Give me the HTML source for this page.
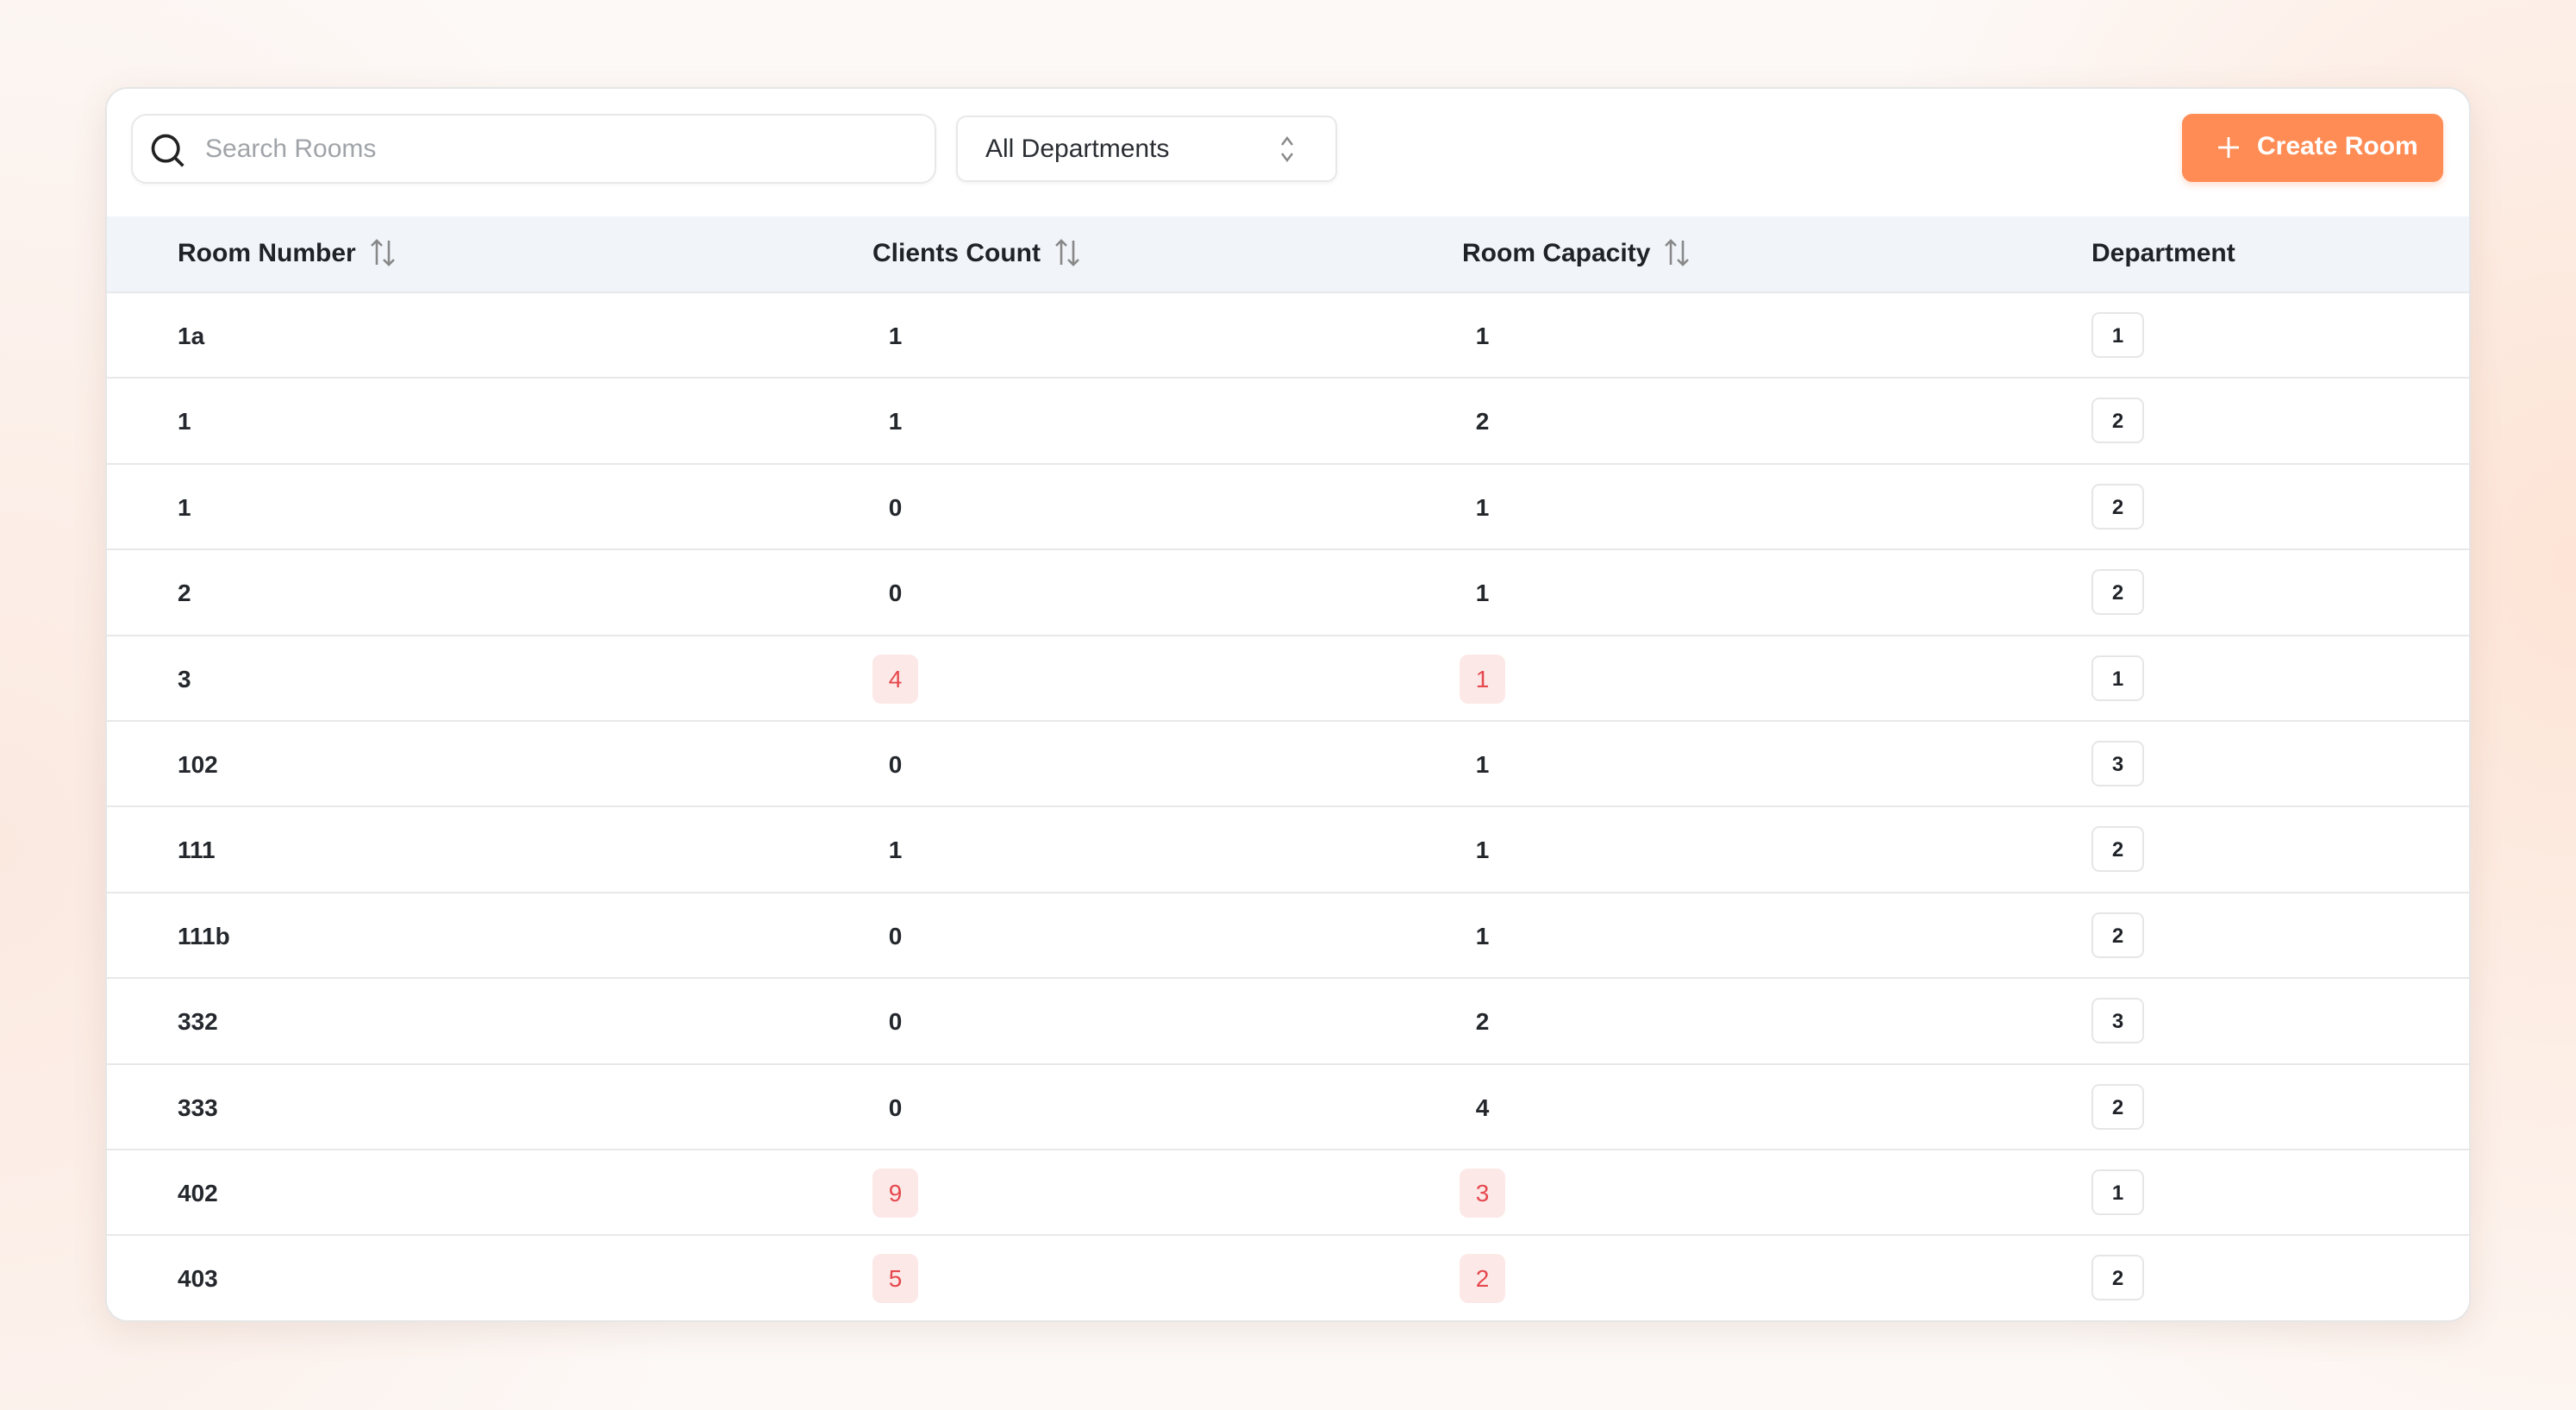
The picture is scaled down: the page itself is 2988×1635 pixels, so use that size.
<!DOCTYPE html>
<html><head><meta charset="utf-8"><style>
*{box-sizing:border-box;margin:0;padding:0}
body{width:2988px;height:1635px;overflow:hidden;font-family:"Liberation Sans",sans-serif;color:#1f2328;
background:radial-gradient(ellipse 900px 1200px at 0% 60%,#fbe9e0 0%,rgba(251,233,224,0) 100%),radial-gradient(ellipse 900px 1200px at 100% 40%,#fde4d6 0%,rgba(253,228,214,0) 100%),#fdf9f7;position:relative}
.card{position:absolute;left:122px;top:101px;width:2744px;height:1432px;background:#fff;border-radius:26px;border:2px solid #e6e6e6;box-shadow:0 10px 40px rgba(120,80,60,0.12);overflow:hidden}
.search{position:absolute;left:28px;top:29px;width:934px;height:81px;border:2px solid #e8e8e8;border-radius:18px;box-shadow:0 2px 4px rgba(0,0,0,.04)}
.search span{position:absolute;left:84px;top:22px;font-size:30px;color:#a0a4a8}
.search svg{position:absolute;left:18px;top:18px}
.sel{position:absolute;left:985px;top:31px;width:442px;height:77px;border:2px solid #e8e8e8;border-radius:12px;box-shadow:0 2px 4px rgba(0,0,0,.05)}
.sel span{position:absolute;left:32px;top:20px;font-size:30px;color:#2a2e33}
.sel svg{position:absolute;right:46px;top:20px}
.btn{position:absolute;left:2407px;top:29px;width:303px;height:79px;background:#ff8c55;border-radius:12px;color:#fff;font-size:30px;font-weight:bold;box-shadow:0 4px 8px rgba(255,140,85,.25)}
.btn span{position:absolute;left:87px;top:21px}
.btn svg{position:absolute;left:40px;top:25px}
.head{position:absolute;left:0;top:148px;width:100%;height:89px;background:#f1f5f9;border-bottom:2px solid #e6e8eb}
.h{position:absolute;top:26px;font-size:30px;font-weight:bold;color:#1f2328;white-space:nowrap}
.h svg{vertical-align:-6px;margin-left:16px}
.row{position:absolute;left:0;width:100%;height:99.4px;border-bottom:2px solid #e8e8e8}
.c{position:absolute;top:34px;font-size:28px;font-weight:bold;color:#24282d}
.n{position:absolute;top:21px;width:53px;height:57px;line-height:57px;text-align:center;font-size:28px;font-weight:bold;color:#24282d;border-radius:10px}
.r{background:#fde8e8;color:#e5484d;font-weight:normal}
.d{position:absolute;left:2302px;top:22px;width:61px;height:53px;line-height:51px;text-align:center;font-size:24px;font-weight:bold;border:2px solid #e6e6e6;border-radius:9px;background:#fff}
</style></head><body>
<div class="card">
<div class="search"><svg width="44" height="44" viewBox="0 0 24 24" fill="none" stroke="#222" stroke-width="2"><circle cx="11" cy="11" r="8"/><path d="M17 17l5 5"/></svg><span>Search Rooms</span></div>
<div class="sel"><span>All Departments</span><svg width="20" height="34" viewBox="0 0 10 17" fill="none" stroke="#888" stroke-width="1.2"><path d="M2 6l3-4 3 4M2 11l3 4 3-4"/></svg></div>
<div class="btn"><svg width="28" height="28" viewBox="0 0 14 14" stroke="#fff" stroke-width="1.4"><path d="M7 1v12M1 7h12"/></svg><span>Create Room</span></div>
<div class="head">
<div class="h" style="left:82px">Room Number<svg width="30" height="32" viewBox="0 0 15 16" fill="none" stroke="#888" stroke-width="1.3"><path d="M4 15V1M1 4l3-3 3 3M11 1v14M8 12l3 3 3-3"/></svg></div>
<div class="h" style="left:888px">Clients Count<svg width="30" height="32" viewBox="0 0 15 16" fill="none" stroke="#888" stroke-width="1.3"><path d="M4 15V1M1 4l3-3 3 3M11 1v14M8 12l3 3 3-3"/></svg></div>
<div class="h" style="left:1572px">Room Capacity<svg width="30" height="32" viewBox="0 0 15 16" fill="none" stroke="#888" stroke-width="1.3"><path d="M4 15V1M1 4l3-3 3 3M11 1v14M8 12l3 3 3-3"/></svg></div>
<div class="h" style="left:2302px">Department</div>
</div>
<div style="position:absolute;left:0;top:237px;width:100%">
<div class="row" style="top:0"><div class="c" style="left:82px">1a</div><div class="n" style="left:888px">1</div><div class="n" style="left:1569px">1</div><div class="d">1</div></div>
<div class="row" style="top:99.4px"><div class="c" style="left:82px">1</div><div class="n" style="left:888px">1</div><div class="n" style="left:1569px">2</div><div class="d">2</div></div>
<div class="row" style="top:198.8px"><div class="c" style="left:82px">1</div><div class="n" style="left:888px">0</div><div class="n" style="left:1569px">1</div><div class="d">2</div></div>
<div class="row" style="top:298.2px"><div class="c" style="left:82px">2</div><div class="n" style="left:888px">0</div><div class="n" style="left:1569px">1</div><div class="d">2</div></div>
<div class="row" style="top:397.6px"><div class="c" style="left:82px">3</div><div class="n r" style="left:888px">4</div><div class="n r" style="left:1569px">1</div><div class="d">1</div></div>
<div class="row" style="top:497px"><div class="c" style="left:82px">102</div><div class="n" style="left:888px">0</div><div class="n" style="left:1569px">1</div><div class="d">3</div></div>
<div class="row" style="top:596.4px"><div class="c" style="left:82px">111</div><div class="n" style="left:888px">1</div><div class="n" style="left:1569px">1</div><div class="d">2</div></div>
<div class="row" style="top:695.8px"><div class="c" style="left:82px">111b</div><div class="n" style="left:888px">0</div><div class="n" style="left:1569px">1</div><div class="d">2</div></div>
<div class="row" style="top:795.2px"><div class="c" style="left:82px">332</div><div class="n" style="left:888px">0</div><div class="n" style="left:1569px">2</div><div class="d">3</div></div>
<div class="row" style="top:894.6px"><div class="c" style="left:82px">333</div><div class="n" style="left:888px">0</div><div class="n" style="left:1569px">4</div><div class="d">2</div></div>
<div class="row" style="top:994px"><div class="c" style="left:82px">402</div><div class="n r" style="left:888px">9</div><div class="n r" style="left:1569px">3</div><div class="d">1</div></div>
<div class="row" style="top:1093.4px;border-bottom:none"><div class="c" style="left:82px">403</div><div class="n r" style="left:888px">5</div><div class="n r" style="left:1569px">2</div><div class="d">2</div></div>
</div>
</div>
</body></html>
